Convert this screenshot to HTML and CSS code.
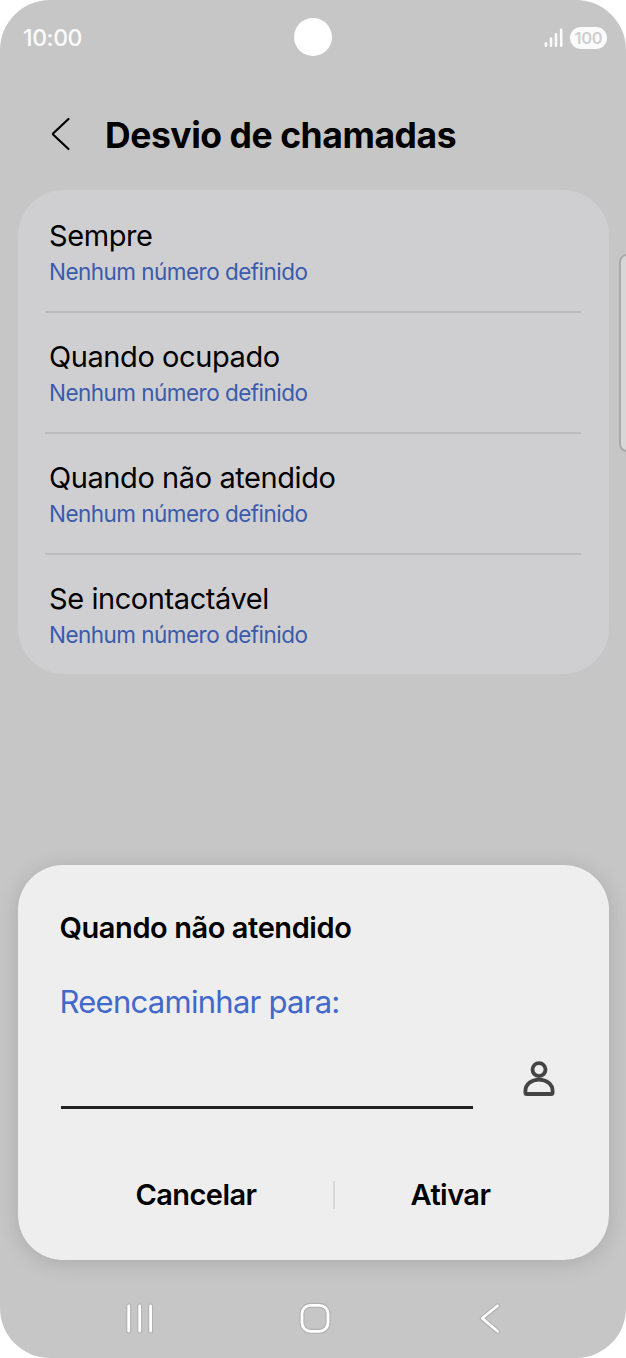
FILE: index.html
```html
<!DOCTYPE html>
<html lang="pt">
<head>
    <meta charset="UTF-8">
    <meta name="viewport" content="width=device-width, initial-scale=1.0">
    <title>Desvio de chamadas</title>
    <link rel="stylesheet" href="styles.css">
</head>
<body>
    <div class="phone">
        <div class="status-bar">
            <span class="clock">10:00</span>
            <div class="status-icons">
                <svg class="signal" width="20" height="20" viewBox="0 0 20 20">
                    <path d="M1.9 15.4V17.7M7 10.6V17.7M12 6.2V17.7M17.2 1.7V17.7" fill="none" stroke="#fbfbfb" stroke-width="2.6" stroke-linecap="round"/>
                </svg>
                <span class="battery">100</span>
            </div>
        </div>
        <div class="camera"></div>

        <header class="page-header">
            <svg class="back-icon" width="22" height="36" viewBox="0 0 22 36">
                <path d="M18.5 3L3.3 17.2Q2.5 18 3.3 18.8L18.5 33" fill="none" stroke="#000" stroke-width="2.2" stroke-linecap="round"/>
            </svg>
            <h1 class="page-title">Desvio de chamadas</h1>
        </header>

        <ul class="settings-list">
            <li class="setting">
                <p class="setting-name">Sempre</p>
                <p class="setting-value">Nenhum número definido</p>
            </li>
            <li class="setting">
                <p class="setting-name">Quando ocupado</p>
                <p class="setting-value">Nenhum número definido</p>
            </li>
            <li class="setting">
                <p class="setting-name">Quando não atendido</p>
                <p class="setting-value">Nenhum número definido</p>
            </li>
            <li class="setting">
                <p class="setting-name">Se incontactável</p>
                <p class="setting-value">Nenhum número definido</p>
            </li>
        </ul>

        <div class="edge-handle"></div>

        <div class="dialog">
            <h2 class="dialog-title">Quando não atendido</h2>
            <p class="dialog-label">Reencaminhar para:</p>
            <div class="input-row">
                <div class="number-input"></div>
                <svg class="contact-icon" width="34" height="38" viewBox="0 0 34 38">
                    <g fill="none" stroke="#444" stroke-width="3.8">
                        <circle cx="17" cy="9.6" r="6.5"/>
                        <path d="M4.8 34H29.2Q30.6 34 30.6 32.4V31C30.6 24.3 24.6 19.7 17 19.7S3.4 24.3 3.4 31V32.4Q3.4 34 4.8 34Z"/>
                    </g>
                </svg>
            </div>
            <div class="dialog-buttons">
                <span class="btn cancel">Cancelar</span>
                <span class="separator"></span>
                <span class="btn">Ativar</span>
            </div>
        </div>

        <nav class="nav-bar">
            <svg width="30" height="34" viewBox="0 0 30 34">
                <g fill="none" stroke-linecap="round">
                    <path d="M3.7 5V30M14.7 5V30M25.6 5V30" stroke="#b0b0b0" stroke-width="5"/>
                    <path d="M3.7 5V30M14.7 5V30M25.6 5V30" stroke="#fff" stroke-width="2.8"/>
                </g>
            </svg>
            <svg class="home-icon" width="34" height="34" viewBox="0 0 34 34">
                <g fill="none">
                    <rect x="4" y="4.3" width="26" height="26" rx="8.5" stroke="#b0b0b0" stroke-width="5"/>
                    <rect x="4" y="4.3" width="26" height="26" rx="8.5" stroke="#fff" stroke-width="2.8"/>
                </g>
            </svg>
            <svg width="22" height="34" viewBox="0 0 22 34">
                <g fill="none" stroke-linecap="round" stroke-linejoin="round">
                    <path d="M18.5 4.8L3.2 17.3L18.5 30.3" stroke="#b0b0b0" stroke-width="4.8"/>
                    <path d="M18.5 4.8L3.2 17.3L18.5 30.3" stroke="#fff" stroke-width="2.7"/>
                </g>
            </svg>
        </nav>
    </div>
</body>
</html>
```

FILE: styles.css
```css
* {
    margin: 0;
    padding: 0;
    box-sizing: border-box;
    font-family: Inter, "Liberation Sans", sans-serif;
}
body {
    background-color: #fff;
    color: #000;
}
.phone {
    position: relative;
    width: 626px;
    height: 1358px;
    background-color: #c6c6c6;
    border-radius: 50px;
    overflow: hidden;
    display: flex;
    flex-direction: column;
}
.status-bar {
    height: 76px;
    padding: 0 19px 0 23px;
    display: flex;
    justify-content: space-between;
    align-items: center;
}
.clock {
    color: #fbfbfb;
    font-size: 23px;
    font-weight: 500;
    letter-spacing: -0.4px;
}
.status-icons {
    display: flex;
    align-items: center;
    gap: 6px;
}
.battery {
    width: 37px;
    height: 22px;
    border-radius: 11px;
    background-color: #fbfbfb;
    color: #cfcfcf;
    font-size: 16.5px;
    font-weight: 600;
    letter-spacing: -0.3px;
    line-height: 22px;
    text-align: center;
}
.camera {
    position: absolute;
    left: 294px;
    top: 17.5px;
    width: 38px;
    height: 38px;
    border-radius: 50%;
    background-color: #fff;
}
.page-header {
    height: 114px;
    padding: 2px 0 0 50px;
    display: flex;
    align-items: center;
    gap: 33px;
}
.page-title {
    padding-top: 2px;
    font-size: 35.5px;
    font-weight: 700;
    letter-spacing: -0.45px;
    white-space: nowrap;
}
.settings-list {
    list-style: none;
    margin: 0 17.5px;
    height: 484px;
    border-radius: 46px;
    background-color: #cfcfd1;
    display: flex;
    flex-direction: column;
}
.setting {
    height: 121.3px;
    margin: 0 27.5px;
    padding: 28px 4px 0;
}
.setting + .setting {
    border-top: 2px solid #bcbcbe;
    padding-top: 26px;
}
.setting-name {
    font-size: 29px;
    line-height: 36px;
    letter-spacing: -0.42px;
}
.setting-value {
    color: #3a5bab;
    font-size: 22.5px;
    line-height: 28px;
    margin-top: 4px;
    letter-spacing: -0.53px;
}
.edge-handle {
    position: absolute;
    left: 619px;
    top: 254px;
    width: 20px;
    height: 198px;
    border: 2px solid #aaa;
    border-radius: 8px;
    background-color: #d7d7d7;
}
.dialog {
    position: absolute;
    left: 17.5px;
    right: 17.5px;
    top: 865px;
    height: 395px;
    padding: 45px 42px 0;
    border-radius: 45px;
    background-color: #eee;
    box-shadow: 0 3px 22px rgba(0,0,0,0.14);
}
.dialog-title {
    font-size: 29px;
    font-weight: 600;
    line-height: 36px;
    letter-spacing: -0.42px;
}
.dialog-label {
    margin-top: 36px;
    color: #4168cb;
    font-size: 31px;
    line-height: 40px;
    letter-spacing: -0.73px;
}
.input-row {
    margin-top: 34px;
    display: flex;
    justify-content: space-between;
    padding: 0 10.5px 0 1.5px;
}
.number-input {
    width: 412px;
    height: 53px;
    border-bottom: 3px solid #222;
}
.contact-icon {
    margin-top: 4px;
}
.dialog-buttons {
    display: flex;
    align-items: center;
    margin-top: 68px;
    height: 36px;
}
.btn {
    flex: 1;
    font-size: 29px;
    font-weight: 600;
    line-height: 36px;
    letter-spacing: -0.55px;
    text-align: center;
}
.btn.cancel {
    flex: 0 0 273px;
}
.separator {
    width: 2px;
    height: 28px;
    background-color: #d8d8d8;
}
.nav-bar {
    margin-top: auto;
    height: 80px;
    padding: 0 125px;
    display: flex;
    justify-content: space-between;
    align-items: center;
}
.home-icon {
    margin-right: 5px;
}
```
